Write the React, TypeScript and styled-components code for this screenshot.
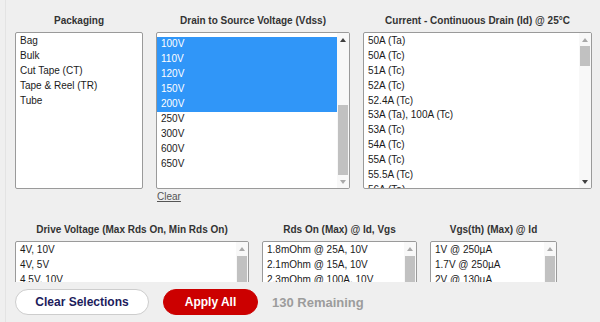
import React from "react";
import styled, { createGlobalStyle } from "styled-components";

const GlobalStyle = createGlobalStyle`
  html, body { margin: 0; padding: 0; background: #efefef; }
  body { font-family: "Liberation Sans", Arial, sans-serif; }
`;

const Page = styled.div`
  height: 322px;
  padding-left: 5px;
  box-sizing: border-box;
  overflow: hidden;
`;

const Panel = styled.div`
  height: 100%;
  border-left: 1px solid #e3e3e3;
  padding-left: 9px;
  display: flex;
  flex-direction: column;
`;

const Filters = styled.div`
  flex: 1;
  min-height: 0;
  overflow: hidden;
  padding-top: 15px;
`;

const FilterRow = styled.div<{ $mt?: number }>`
  display: flex;
  gap: 13px;
  align-items: flex-start;
  margin-top: ${(p) => p.$mt ?? 0}px;
`;

const Filter = styled.div<{ $w: number }>`
  width: ${(p) => p.$w}px;
  flex: none;
  display: flex;
  flex-direction: column;
`;

const Title = styled.div`
  font-size: 10px;
  line-height: 12px;
  font-weight: bold;
  color: #333;
  text-align: center;
  margin-bottom: 5px;
  white-space: nowrap;
`;

const ListBox = styled.div`
  height: 157px;
  box-sizing: border-box;
  border: 1px solid #9a9a9a;
  border-radius: 2px;
  background: #fff;
  display: flex;
  overflow: hidden;
`;

const Options = styled.div`
  flex: 1;
  min-width: 0;
  overflow: hidden;
  padding-top: 1px;
`;

const OptionsInner = styled.div<{ $offset: number }>`
  margin-top: ${(p) => -p.$offset}px;
`;

const Option = styled.div<{ $selected?: boolean }>`
  height: 14.9px;
  line-height: 14.9px;
  font-size: 10px;
  padding: 0 4px;
  white-space: nowrap;
  color: ${(p) => (p.$selected ? "#fff" : "#1a1a1a")};
  background: ${(p) => (p.$selected ? "#3096f8" : "transparent")};
`;

const Scrollbar = styled.div`
  width: 12px;
  flex: none;
  display: flex;
  flex-direction: column;
  background: #f8f8f8;
`;

const Arrow = styled.div<{ $dir: "up" | "down"; $active?: boolean }>`
  height: 13px;
  flex: none;
  display: flex;
  align-items: center;
  justify-content: center;
  &::before {
    content: "";
    width: 0;
    height: 0;
    border-left: 3.5px solid transparent;
    border-right: 3.5px solid transparent;
    ${(p) =>
      p.$dir === "up"
        ? `border-bottom: 4px solid ${p.$active ? "#404040" : "#a9a9a9"};`
        : `border-top: 4px solid ${p.$active ? "#404040" : "#a9a9a9"};`}
  }
`;

const Track = styled.div`
  flex: 1;
  min-height: 0;
  display: flex;
  flex-direction: column;
`;

const Thumb = styled.div<{ $top: number; $size: number }>`
  margin: ${(p) => p.$top}px 1px 0;
  height: ${(p) => p.$size}px;
  flex: none;
  background: #c1c1c1;
`;

const ClearLink = styled.a`
  align-self: flex-start;
  margin-top: 2px;
  padding-left: 1px;
  font-size: 10px;
  line-height: 12px;
  color: #555;
  text-decoration: underline;
  cursor: pointer;
`;

const Footer = styled.div`
  height: 40px;
  flex: none;
  display: flex;
  align-items: center;
  gap: 14px;
`;

const PillButton = styled.button<{ $primary?: boolean; $w: number }>`
  width: ${(p) => p.$w}px;
  height: 26px;
  box-sizing: border-box;
  border-radius: 13px;
  padding: 0;
  font-family: "Liberation Sans", Arial, sans-serif;
  font-size: 12px;
  font-weight: bold;
  cursor: pointer;
  color: ${(p) => (p.$primary ? "#fff" : "#1c1c5c")};
  background: ${(p) => (p.$primary ? "#cc0000" : "#fff")};
  border: 1px solid ${(p) => (p.$primary ? "#cc0000" : "#cdcdcd")};
`;

const Remaining = styled.span`
  font-size: 13px;
  font-weight: bold;
  color: #9c9c9c;
`;

type Scroll = { top: number; size: number; upActive?: boolean; downActive?: boolean };

type FilterDef = {
  title: string;
  width: number;
  options: { label: string; selected?: boolean }[];
  offset?: number;
  scroll?: Scroll;
  clear?: boolean;
};

const topFilters: FilterDef[] = [
  {
    title: "Packaging",
    width: 128,
    options: [
      { label: "Bag" },
      { label: "Bulk" },
      { label: "Cut Tape (CT)" },
      { label: "Tape & Reel (TR)" },
      { label: "Tube" },
    ],
  },
  {
    title: "Drain to Source Voltage (Vdss)",
    width: 194,
    offset: 11.5,
    clear: true,
    scroll: { top: 59, size: 70, upActive: true },
    options: [
      { label: "80V" },
      { label: "100V", selected: true },
      { label: "110V", selected: true },
      { label: "120V", selected: true },
      { label: "150V", selected: true },
      { label: "200V", selected: true },
      { label: "250V" },
      { label: "300V" },
      { label: "600V" },
      { label: "650V" },
    ],
  },
  {
    title: "Current - Continuous Drain (Id) @ 25°C",
    width: 229,
    scroll: { top: 0, size: 20, downActive: true },
    options: [
      { label: "50A (Ta)" },
      { label: "50A (Tc)" },
      { label: "51A (Tc)" },
      { label: "52A (Tc)" },
      { label: "52.4A (Tc)" },
      { label: "53A (Ta), 100A (Tc)" },
      { label: "53A (Tc)" },
      { label: "54A (Tc)" },
      { label: "55A (Tc)" },
      { label: "55.5A (Tc)" },
      { label: "56A (Ta)" },
      { label: "56A (Tc)" },
    ],
  },
];

const bottomFilters: FilterDef[] = [
  {
    title: "Drive Voltage (Max Rds On, Min Rds On)",
    width: 234,
    scroll: { top: 1, size: 60, downActive: true },
    options: [
      { label: "4V, 10V" },
      { label: "4V, 5V" },
      { label: "4.5V, 10V" },
      { label: "5V, 10V" },
    ],
  },
  {
    title: "Rds On (Max) @ Id, Vgs",
    width: 155,
    scroll: { top: 1, size: 60, downActive: true },
    options: [
      { label: "1.8mOhm @ 25A, 10V" },
      { label: "2.1mOhm @ 15A, 10V" },
      { label: "2.3mOhm @ 100A, 10V" },
      { label: "2.5mOhm @ 50A, 10V" },
    ],
  },
  {
    title: "Vgs(th) (Max) @ Id",
    width: 127,
    scroll: { top: 1, size: 60, downActive: true },
    options: [
      { label: "1V @ 250µA" },
      { label: "1.7V @ 250µA" },
      { label: "2V @ 130µA" },
      { label: "2V @ 250µA" },
    ],
  },
];

function FilterBlock({ f }: { f: FilterDef }) {
  return (
    <Filter $w={f.width}>
      <Title>{f.title}</Title>
      <ListBox>
        <Options>
          <OptionsInner $offset={f.offset ?? 0}>
            {f.options.map((o) => (
              <Option key={o.label} $selected={o.selected}>
                {o.label}
              </Option>
            ))}
          </OptionsInner>
        </Options>
        {f.scroll && (
          <Scrollbar>
            <Arrow $dir="up" $active={f.scroll.upActive} />
            <Track>
              <Thumb $top={f.scroll.top} $size={f.scroll.size} />
            </Track>
            <Arrow $dir="down" $active={f.scroll.downActive} />
          </Scrollbar>
        )}
      </ListBox>
      {f.clear && <ClearLink>Clear</ClearLink>}
    </Filter>
  );
}

export default function App() {
  return (
    <>
      <GlobalStyle />
      <Page>
        <Panel>
          <Filters>
            <FilterRow>
              {topFilters.map((f) => (
                <FilterBlock key={f.title} f={f} />
              ))}
            </FilterRow>
            <FilterRow $mt={21}>
              {bottomFilters.map((f) => (
                <FilterBlock key={f.title} f={f} />
              ))}
            </FilterRow>
          </Filters>
          <Footer>
            <PillButton $w={134}>Clear Selections</PillButton>
            <PillButton $w={95} $primary>
              Apply All
            </PillButton>
            <Remaining>130 Remaining</Remaining>
          </Footer>
        </Panel>
      </Page>
    </>
  );
}
